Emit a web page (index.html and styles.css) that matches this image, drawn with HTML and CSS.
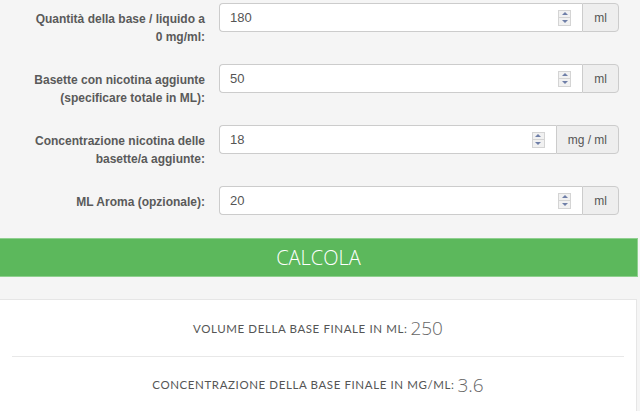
FILE: index.html
```html
<!DOCTYPE html>
<html lang="it">
<head>
    <meta charset="UTF-8">
    <meta name="viewport" content="width=device-width, initial-scale=1.0">
    <title>Calcolatore base nicotina</title>
    <link rel="stylesheet" href="styles.css">
</head>
<body>
    <form class="calc-form">
        <div class="form-row">
            <label for="base-ml">Quantità della base / liquido a 0 mg/ml:</label>
            <div class="input-group">
                <div class="number-field">
                    <input type="text" id="base-ml" value="180">
                    <span class="spinner"><i class="up"></i><i class="down"></i></span>
                </div>
                <span class="addon">ml</span>
            </div>
        </div>

        <div class="form-row">
            <label for="shot-ml">Basette con nicotina aggiunte (specificare totale in ML):</label>
            <div class="input-group">
                <div class="number-field">
                    <input type="text" id="shot-ml" value="50">
                    <span class="spinner"><i class="up"></i><i class="down"></i></span>
                </div>
                <span class="addon">ml</span>
            </div>
        </div>

        <div class="form-row">
            <label for="shot-mg">Concentrazione nicotina delle basette/a aggiunte:</label>
            <div class="input-group">
                <div class="number-field">
                    <input type="text" id="shot-mg" value="18">
                    <span class="spinner"><i class="up"></i><i class="down"></i></span>
                </div>
                <span class="addon">mg / ml</span>
            </div>
        </div>

        <div class="form-row">
            <label for="aroma-ml">ML Aroma (opzionale):</label>
            <div class="input-group">
                <div class="number-field">
                    <input type="text" id="aroma-ml" value="20">
                    <span class="spinner"><i class="up"></i><i class="down"></i></span>
                </div>
                <span class="addon">ml</span>
            </div>
        </div>

        <button type="button" class="btn-calc">Calcola</button>
    </form>

    <div class="results">
        <p class="result-line">Volume della base finale in ML: <span class="value">250</span></p>
        <p class="result-line">Concentrazione della base finale in MG/ML: <span class="value">3.6</span></p>
    </div>
</body>
</html>
```

FILE: styles.css
```css
* {
    box-sizing: border-box;
}

body {
    margin: 0;
    background-color: #f5f5f5;
    font-family: "Liberation Sans", Arial, sans-serif;
    color: #555;
    overflow: hidden;
}

.calc-form {
    padding-top: 3px;
}

.form-row {
    display: grid;
    grid-template-columns: 205px 400px;
    column-gap: 14px;
    align-items: start;
    min-height: 43px;
    margin-bottom: 18px;
}

.form-row:last-of-type {
    margin-bottom: 9px;
}

.form-row label {
    text-align: right;
    font-size: 12px;
    font-weight: 700;
    line-height: 18px;
    padding: 7px 0 0 28px;
    color: #5a5a5a;
}

.input-group {
    display: flex;
    height: 29px;
}

.number-field {
    flex: 1;
    display: flex;
    align-items: center;
    background-color: #fff;
    border: 1px solid #ccc;
    border-right: none;
    border-radius: 4px 0 0 4px;
    padding-right: 11px;
}

.number-field input {
    flex: 1;
    min-width: 0;
    border: none;
    outline: none;
    background: transparent;
    font-family: inherit;
    font-size: 13px;
    color: #555;
    padding: 0 0 0 10px;
}

.spinner {
    width: 13px;
    height: 16px;
    display: flex;
    flex-direction: column;
    border: 1px solid #d4d4d4;
    background-color: #f1f1f1;
}

.spinner i {
    flex: 1;
    display: flex;
    align-items: center;
    justify-content: center;
}

.spinner i + i {
    border-top: 1px solid #d4d4d4;
}

.spinner i::before {
    content: "";
    border-left: 3px solid transparent;
    border-right: 3px solid transparent;
}

.spinner .up::before {
    border-bottom: 3px solid #6f7fa8;
}

.spinner .down::before {
    border-top: 3px solid #6f7fa8;
}

.addon {
    display: flex;
    align-items: center;
    padding: 0 11px;
    font-size: 12px;
    color: #555;
    background-color: #eee;
    border: 1px solid #ccc;
    border-radius: 0 4px 4px 0;
}

.btn-calc {
    display: block;
    width: 639px;
    height: 39px;
    margin: 0 0 0 -1px;
    background-color: #5cb85c;
    border: 1px solid #8fd08f;
    color: #fff;
    font-family: "Open Sans", sans-serif;
    font-weight: 300;
    font-size: 20px;
    text-transform: uppercase;
    cursor: pointer;
}

.results {
    margin-top: 22px;
    width: 638px;
    margin-left: -1px;
    background-color: #fff;
    border: 1px solid #e6e6e6;
    padding: 0 12px;
    min-height: 120px;
}

.result-line {
    margin: 0;
    height: 56px;
    display: flex;
    align-items: center;
    justify-content: center;
    gap: 3px;
    font-family: Lato, sans-serif;
    font-size: 11.5px;
    letter-spacing: 0.6px;
    text-transform: uppercase;
    color: #555;
}

.result-line + .result-line {
    border-top: 1px solid #e8e8e8;
}

.result-line .value {
    font-family: "Open Sans", sans-serif;
    font-size: 19px;
    font-weight: 300;
    letter-spacing: 0;
    color: #666;
}
```
